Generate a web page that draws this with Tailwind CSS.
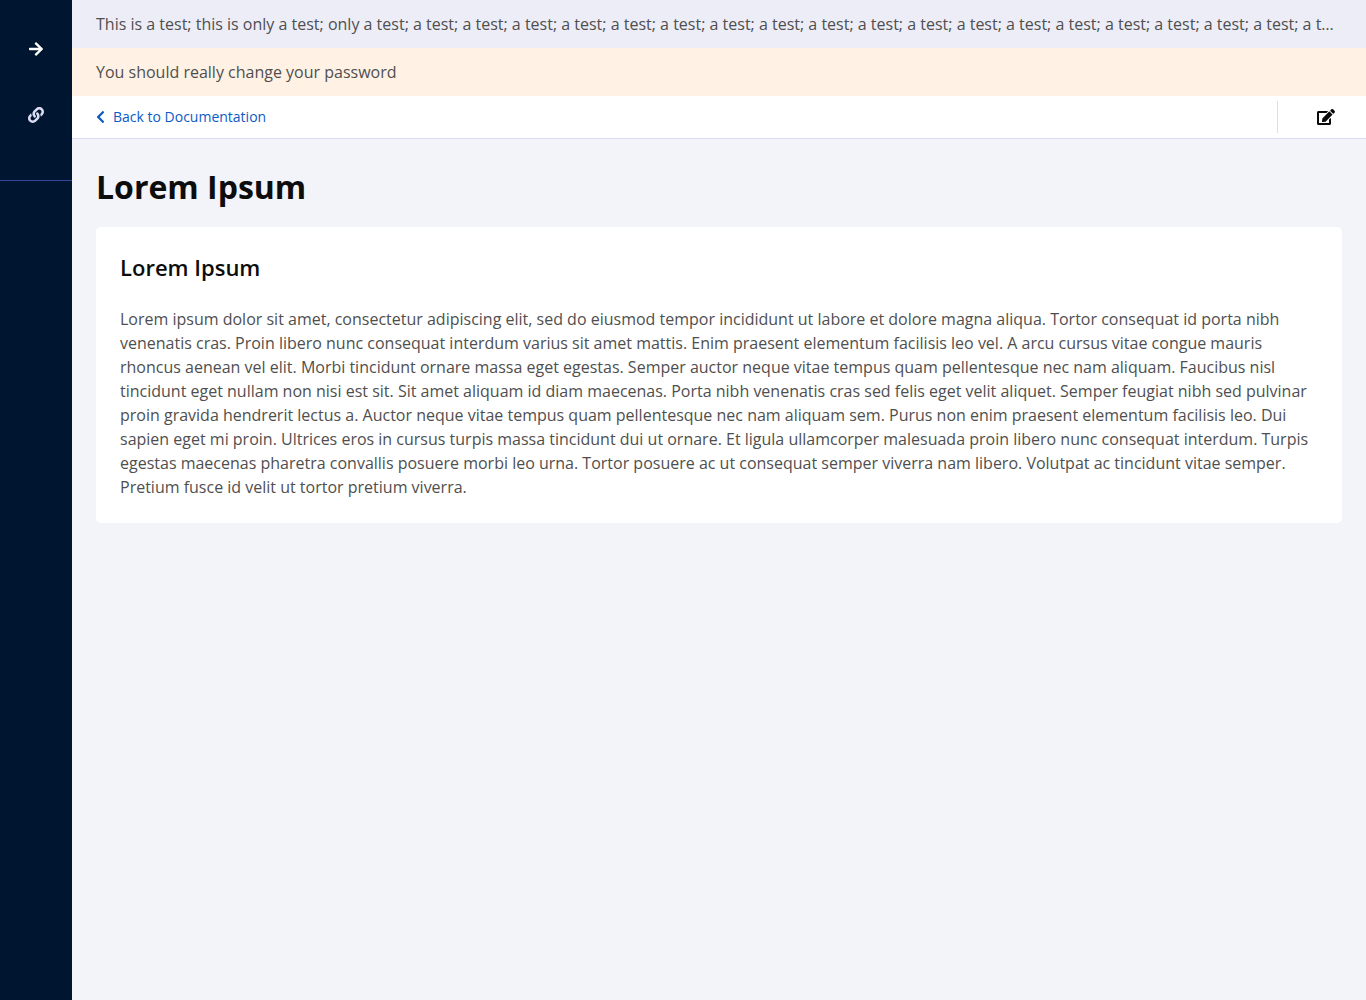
<!DOCTYPE html>
<html lang="en">
<head>
<meta charset="utf-8">
<meta name="viewport" content="width=device-width, initial-scale=1">
<title>Lorem Ipsum</title>
<script src="https://cdn.jsdelivr.net/npm/@tailwindcss/browser@4"></script>
</head>
<body class="flex min-h-screen bg-[#f3f4fa] font-['Open_Sans',sans-serif] text-base text-[#4f4f4f] antialiased">
<nav class="w-18 shrink-0 bg-[#001530]" aria-label="Main">
  <div class="flex flex-col items-center gap-[50px] border-b border-[#3a449c] pt-[41px] pb-[57px]">
    <button type="button" aria-label="Expand menu" class="text-white">
      <svg class="h-4 w-[14px]" viewBox="0 0 448 512" fill="currentColor"><path d="M190.5 66.9l22.2-22.2c9.4-9.4 24.6-9.4 33.9 0L441 239c9.4 9.4 9.4 24.6 0 33.9L246.6 467.300c-9.400 9.400-24.600 9.400-33.900 0l-22.200-22.200c-9.500-9.500-9.300-25 .4-34.300L311.400 296H24c-13.300 0-24-10.700-24-24v-32c0-13.300 10.700-24 24-24h287.400L190.900 101.200c-9.800-9.300-10-24.800-.4-34.300z"/></svg>
    </button>
    <a href="#" aria-label="Links" class="text-[#dcdcf2]">
      <svg class="size-4" viewBox="0 0 512 512" fill="currentColor"><path d="M326.612 185.391c59.747 59.809 58.927 155.698.36 214.590-.11.12-.24.25-.36.37l-67.200 67.200c-59.270 59.270-155.699 59.262-214.960 0-59.270-59.260-59.270-155.700 0-214.960l37.106-37.106c9.840-9.840 26.786-3.300 27.294 10.606.648 17.722 3.826 35.527 9.690 52.721 1.986 5.822.567 12.262-3.783 16.612l-13.087 13.087c-28.026 28.026-28.905 73.660-1.155 101.960 28.024 28.579 74.086 28.749 102.325.51l67.200-67.190c28.191-28.191 28.073-73.757 0-101.830-3.701-3.694-7.429-6.564-10.341-8.569a16.037 16.037 0 0 1-6.947-12.606c-.396-10.567 3.348-21.456 11.698-29.806l21.054-21.055c5.521-5.521 14.182-6.199 20.584-1.731a152.482 152.482 0 0 1 20.522 17.197zM467.547 44.449c-59.261-59.262-155.690-59.270-214.960 0l-67.200 67.200c-.12.12-.25.25-.36.37-58.566 58.892-59.387 154.781.36 214.590a152.454 152.454 0 0 0 20.521 17.196c6.402 4.468 15.064 3.789 20.584-1.731l21.054-21.055c8.350-8.350 12.094-19.239 11.698-29.806a16.037 16.037 0 0 0-6.947-12.606c-2.912-2.005-6.640-4.875-10.341-8.569-28.073-28.073-28.191-73.639 0-101.830l67.200-67.190c28.239-28.239 74.300-28.069 102.325.51 27.750 28.300 26.872 73.934-1.155 101.960l-13.087 13.087c-4.350 4.350-5.769 10.790-3.783 16.612 5.864 17.194 9.042 34.999 9.690 52.721.509 13.906 17.454 20.446 27.294 10.606l37.106-37.106c59.271-59.259 59.271-155.699.001-214.959z"/></svg>
    </a>
  </div>
</nav>
<div class="min-w-0 flex-1">
  <p class="truncate bg-[#ededf7] px-6 py-3">This is a test; this is only a test; only a test; a test; a test; a test; a test; a test; a test; a test; a test; a test; a test; a test; a test; a test; a test; a test; a test; a test; a test; a test; a test; a test; a test; a test</p>
  <p class="bg-[#fff2e5] px-6 py-3">You should really change your password</p>
  <header class="flex items-center justify-between border-b border-[#d9def5] bg-white py-[5px] pl-6">
    <a href="#" class="flex items-center gap-2 text-sm leading-[22px] text-[#0b5bc5]">
      <svg class="h-[14px] w-[9px]" viewBox="0 0 320 512" fill="currentColor"><path d="M34.520 239.030L228.870 44.690c9.370-9.370 24.570-9.370 33.940 0l22.670 22.670c9.360 9.360 9.370 24.520.04 33.900L131.490 256l154.020 154.750c9.340 9.380 9.320 24.540-.04 33.900l-22.670 22.670c-9.370 9.370-24.570 9.370-33.940 0L34.520 272.970c-9.370-9.370-9.370-24.570 0-33.940z"/></svg>
      <span>Back to Documentation</span>
    </a>
    <div class="flex h-8 items-center border-l border-[#d9def5] pr-[31px] pl-[39px]">
      <button type="button" aria-label="Edit" class="text-[#0a0a0a]">
        <svg class="h-4 w-[18px]" viewBox="0 0 576 512" fill="currentColor"><path d="M402.600 83.200l90.200 90.200c3.800 3.800 3.800 10 0 13.800L274.400 405.600l-92.800 10.300c-12.400 1.400-22.900-9.100-21.500-21.500l10.300-92.800L388.800 83.200c3.800-3.800 10-3.800 13.800 0zm162-22.900l-48.800-48.800c-15.200-15.200-39.900-15.200-55.200 0l-35.400 35.400c-3.800 3.800-3.800 10 0 13.800l90.200 90.200c3.800 3.800 10 3.800 13.800 0l35.400-35.400c15.200-15.300 15.200-40 0-55.200zM384 346.200V448H64V128h229.800c3.200 0 6.200-1.300 8.500-3.500l40-40c7.600-7.600 2.200-20.500-8.500-20.500H48C21.500 64 0 85.500 0 112v352c0 26.500 21.500 48 48 48h352c26.500 0 48-21.500 48-48V306.200c0-10.700-12.900-16-20.500-8.500l-40 40c-2.200 2.300-3.500 5.300-3.500 8.500z"/></svg>
      </button>
    </div>
  </header>
  <main class="px-6 py-6">
    <h1 class="text-[32px] leading-12 font-bold text-[#0d0d0d]">Lorem Ipsum</h1>
    <section class="mt-4 rounded-[5px] bg-white p-6">
      <h2 class="text-[22px] leading-8 font-semibold text-[#0d0d0d]">Lorem Ipsum</h2>
      <p class="mt-6">Lorem ipsum dolor sit amet, consectetur adipiscing elit, sed do eiusmod tempor incididunt ut labore et dolore magna aliqua. Tortor consequat id porta nibh venenatis cras. Proin libero nunc consequat interdum varius sit amet mattis. Enim praesent elementum facilisis leo vel. A arcu cursus vitae congue mauris rhoncus aenean vel elit. Morbi tincidunt ornare massa eget egestas. Semper auctor neque vitae tempus quam pellentesque nec nam aliquam. Faucibus nisl tincidunt eget nullam non nisi est sit. Sit amet aliquam id diam maecenas. Porta nibh venenatis cras sed felis eget velit aliquet. Semper feugiat nibh sed pulvinar proin gravida hendrerit lectus a. Auctor neque vitae tempus quam pellentesque nec nam aliquam sem. Purus non enim praesent elementum facilisis leo. Dui sapien eget mi proin. Ultrices eros in cursus turpis massa tincidunt dui ut ornare. Et ligula ullamcorper malesuada proin libero nunc consequat interdum. Turpis egestas maecenas pharetra convallis posuere morbi leo urna. Tortor posuere ac ut consequat semper viverra nam libero. Volutpat ac tincidunt vitae semper. Pretium fusce id velit ut tortor pretium viverra.</p>
    </section>
  </main>
</div>
</body>
</html>
